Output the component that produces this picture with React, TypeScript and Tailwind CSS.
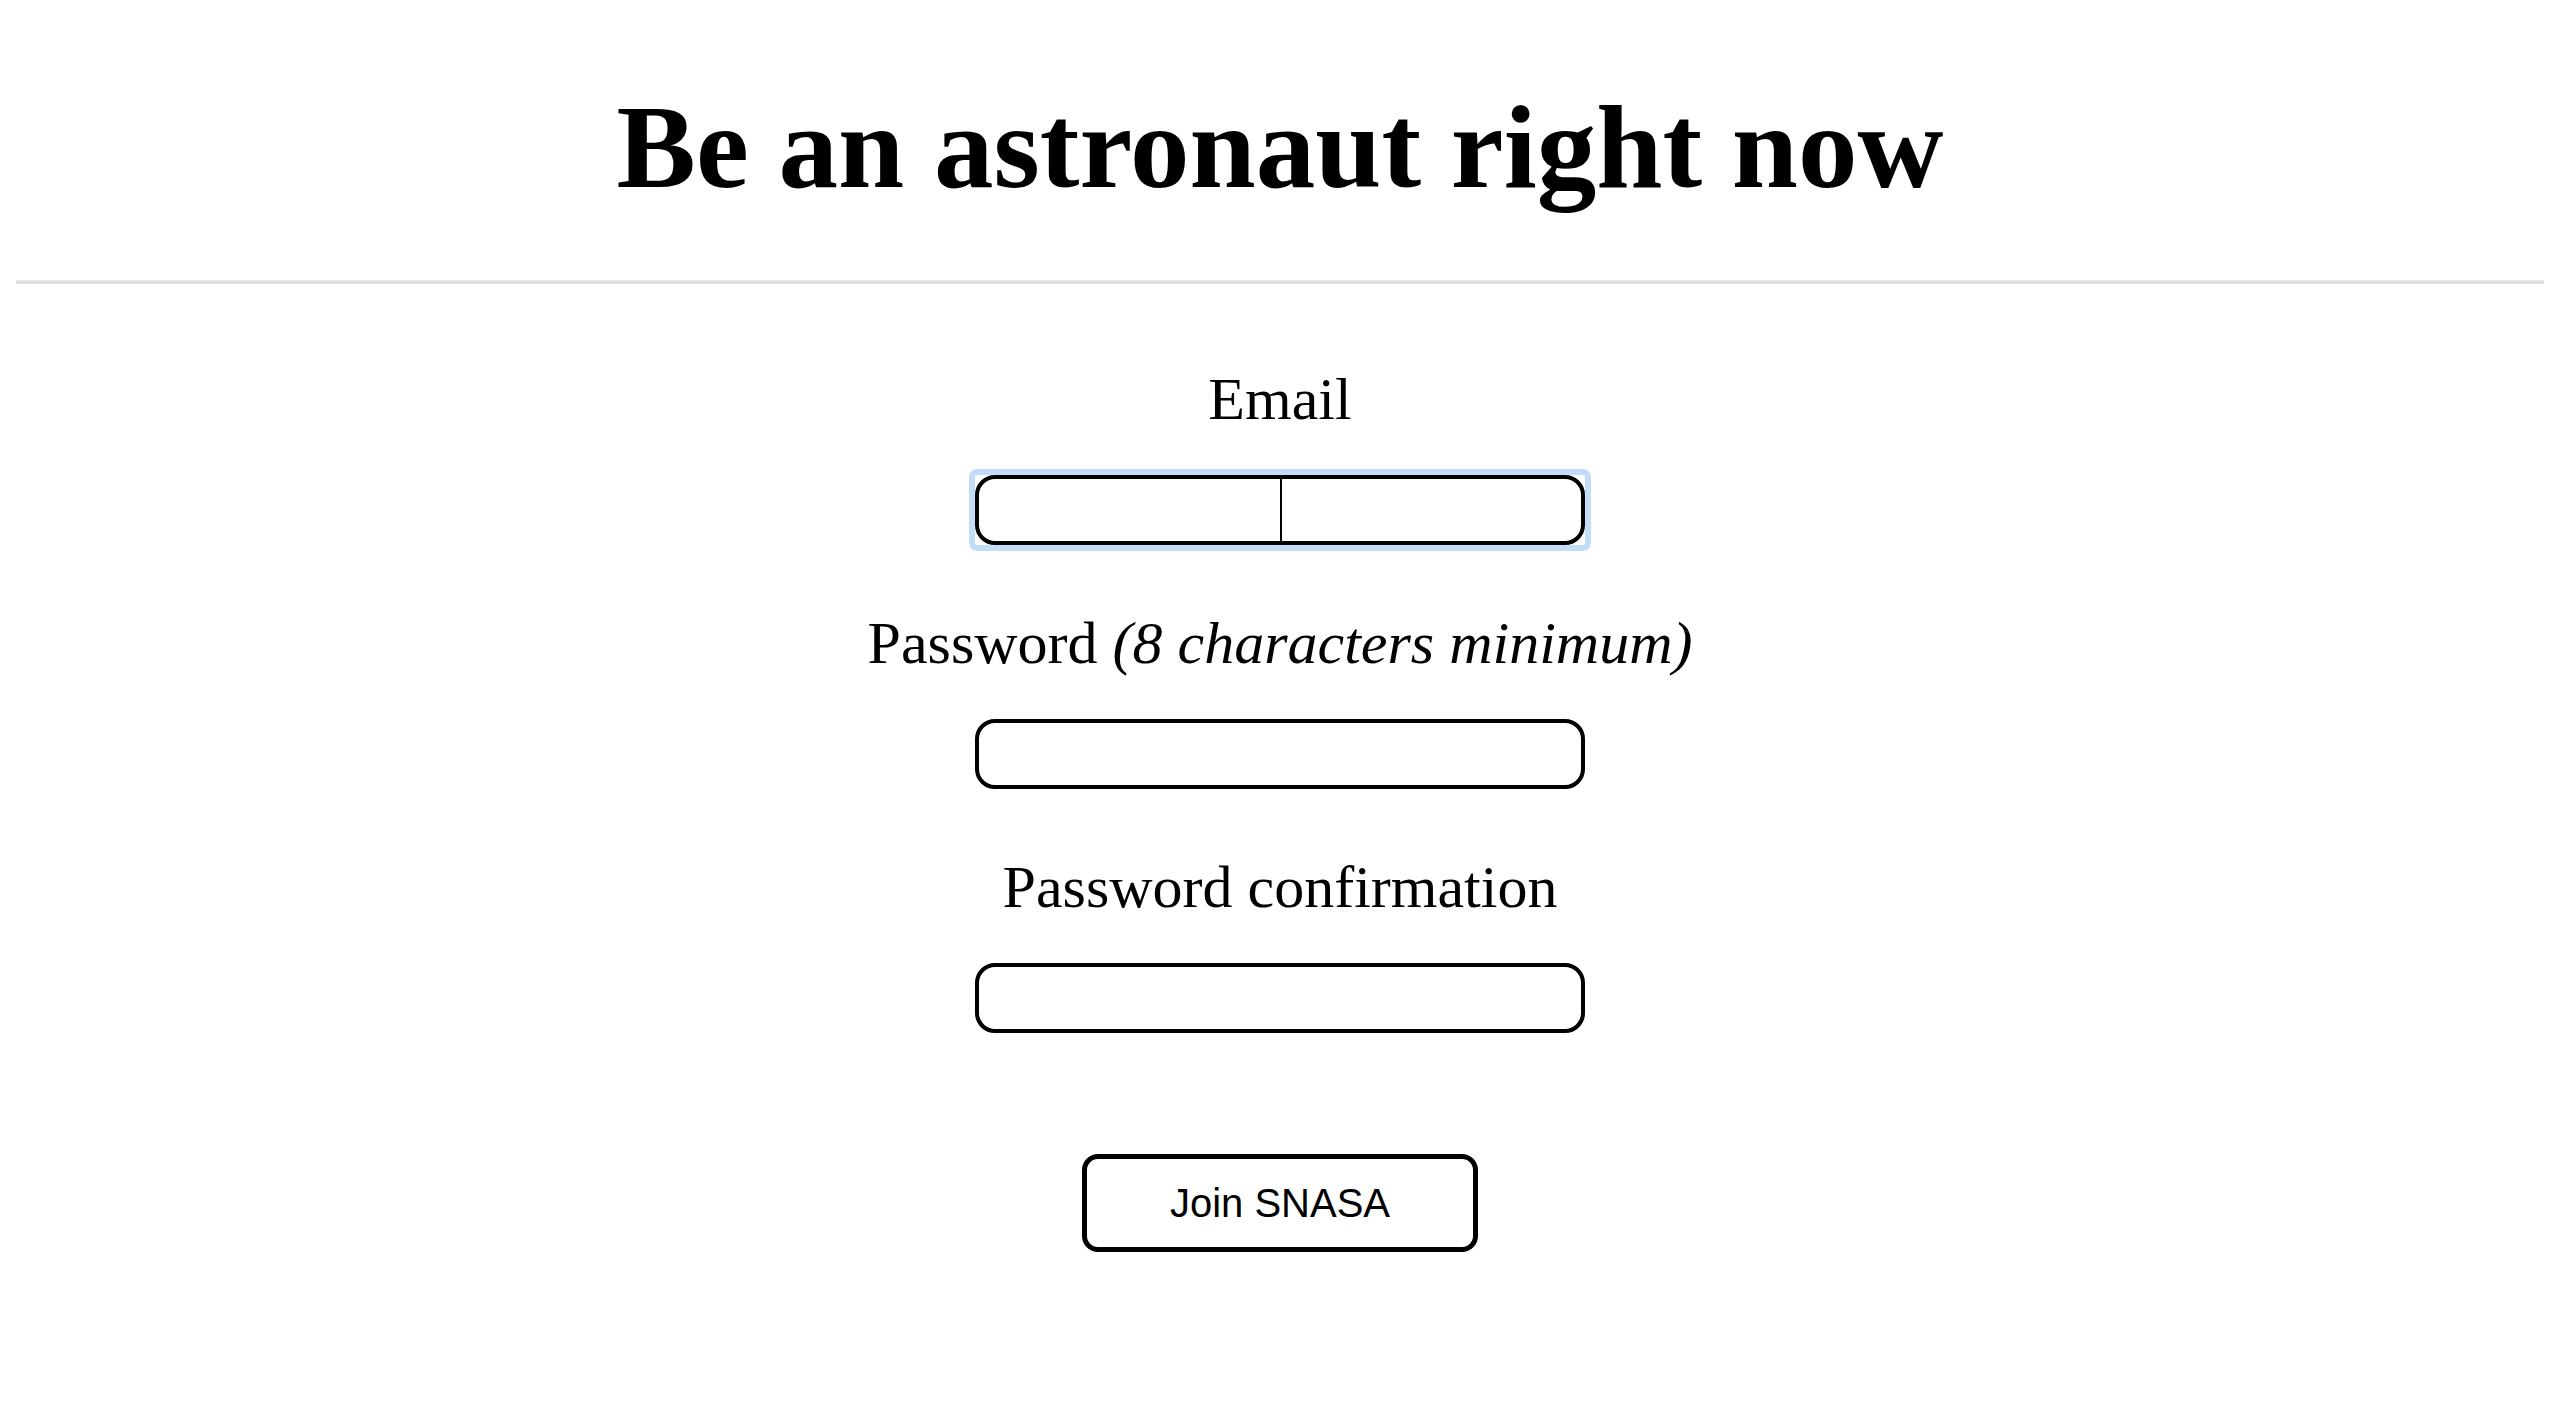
import React from 'react';

const Field: React.FC<{ label: React.ReactNode; type: string; focused?: boolean }> = ({ label, type, focused }) => (
  <div className="flex flex-col items-center">
    <label className="text-[60px] leading-[60px] text-black">{label}</label>
    <div className="relative mt-[46px] w-[610px] h-[70px]">
      {/* focus ring */}
      {focused && <div className="absolute -inset-[6px] rounded-[8px] border-[6px] border-[#c3dcf9]" />}
      <input
        type={type}
        className="relative block w-full h-full rounded-[20px] border-4 border-black bg-white outline-none"
      />
      {/* caret */}
      {focused && <div className="absolute left-1/2 top-[2px] bottom-[2px] w-[2px] bg-black" />}
    </div>
  </div>
);

const App: React.FC = () => {
  return (
    <div className="min-h-screen bg-white px-4 pt-[78px] font-['Liberation_Serif','Times_New_Roman',serif] text-black">
      {/* Header */}
      <h1 className="text-center text-[119px] leading-[138px] font-bold">Be an astronaut right now</h1>
      <div className="mt-[64px] h-[4px] border-t border-[#ececec] bg-[#dedede]" />

      {/* Sign up form */}
      <form className="mt-[85px] flex flex-col items-center" onSubmit={(e) => e.preventDefault()}>
        <Field label="Email" type="email" focused />
        <div className="mt-[68px]">
          <Field
            label={
              <>
                Password <em>(8 characters minimum)</em>
              </>
            }
            type="password"
          />
        </div>
        <div className="mt-[68px]">
          <Field label="Password confirmation" type="password" />
        </div>
        <button
          type="submit"
          className="mt-[121px] w-[396px] h-[98px] rounded-[16px] border-[5px] border-black bg-white font-['Liberation_Sans',Arial,sans-serif] text-[40px] leading-none text-black"
        >
          Join SNASA
        </button>
      </form>
    </div>
  );
};

export default App;
